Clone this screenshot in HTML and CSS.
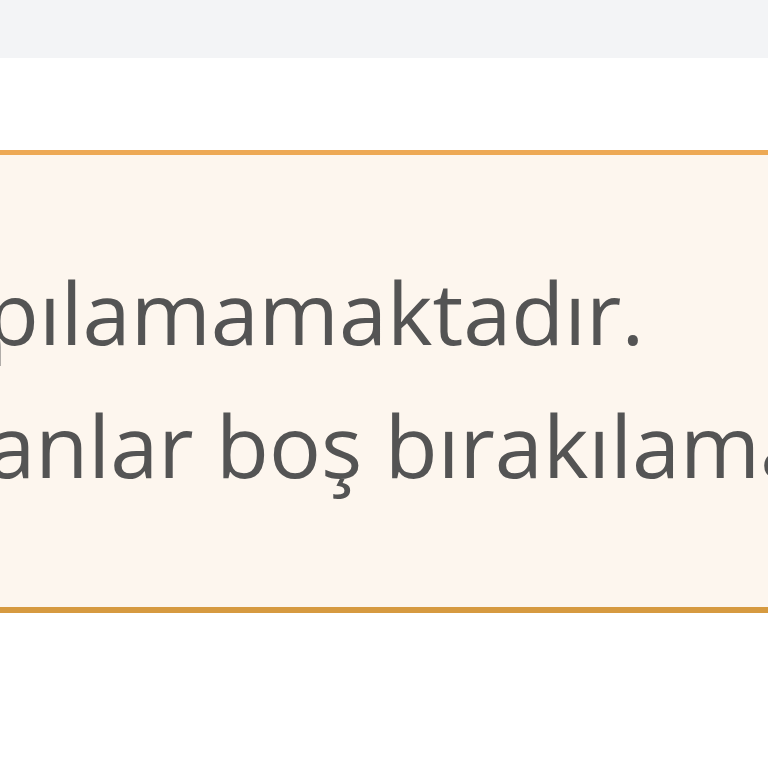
FILE: index.html
```html
<!DOCTYPE html>
<html lang="tr">
<head>
<meta charset="utf-8">
<link rel="stylesheet" href="styles.css">
</head>
<body>
<div class="topbar"></div>
<div class="page">
  <div class="alert">
    <p class="line line-one">İşleminiz yapılamamaktadır.</p>
    <p class="line line-two">Zorunlu alanlar boş bırakılamaz.</p>
  </div>
</div>
</body>
</html>
```
FILE: styles.css
```css
html, body {
  margin: 0;
  padding: 0;
  background: #ffffff;
  overflow: hidden;
  width: 768px;
  height: 768px;
}
.topbar {
  height: 58px;
  background: #f3f4f6;
}
.page {
  padding-top: 92px;
}
.alert {
  background: #fdf6ee;
  border-top: 5px solid #eda955;
  border-bottom: 6px solid #d69a40;
  padding: 90px 0 96px;
  overflow: hidden;
}
.line {
  margin: 0;
  white-space: nowrap;
  font-family: "Open Sans", "Noto Sans", sans-serif;
  font-size: 86.5px;
  line-height: 133px;
  color: #545454;
}
.line-one {
  margin-left: -481px;
}
.line-two {
  margin-left: -423px;
}
```
